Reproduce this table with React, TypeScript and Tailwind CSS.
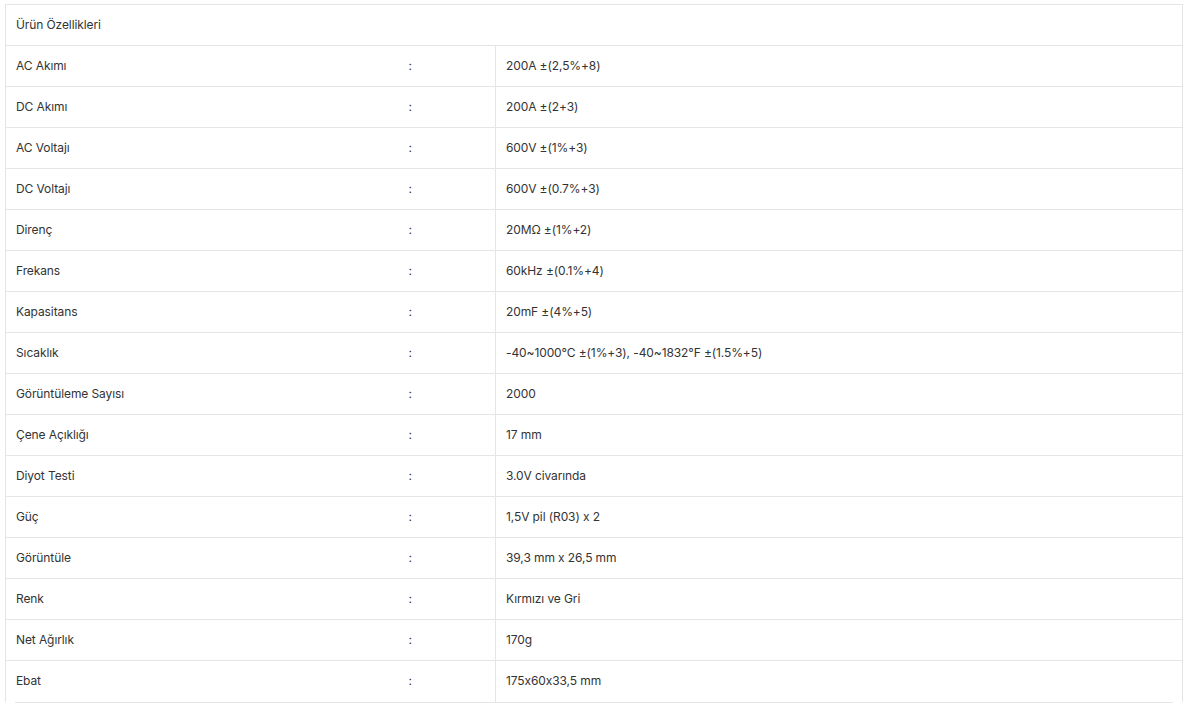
const rows: [string, string][] = [
  ['AC Akımı', '200A ±(2,5%+8)'],
  ['DC Akımı', '200A ±(2+3)'],
  ['AC Voltajı', '600V ±(1%+3)'],
  ['DC Voltajı', '600V ±(0.7%+3)'],
  ['Direnç', '20MΩ ±(1%+2)'],
  ['Frekans', '60kHz ±(0.1%+4)'],
  ['Kapasitans', '20mF ±(4%+5)'],
  ['Sıcaklık', '-40~1000°C ±(1%+3), -40~1832°F ±(1.5%+5)'],
  ['Görüntüleme Sayısı', '2000'],
  ['Çene Açıklığı', '17 mm'],
  ['Diyot Testi', '3.0V civarında'],
  ['Güç', '1,5V pil (R03) x 2'],
  ['Görüntüle', '39,3 mm x 26,5 mm'],
  ['Renk', 'Kırmızı ve Gri'],
  ['Net Ağırlık', '170g'],
  ['Ebat', '175x60x33,5 mm'],
]

function App() {
  return (
    <div className="min-h-screen bg-white pt-[4px] pl-[5px] pr-[6px] text-[12px] text-[#333] tracking-[-0.1px] [font-feature-settings:'calt'_0] font-['Inter','Liberation_Sans',sans-serif]">
      <table className="w-[1178px] border-collapse table-fixed">
        <colgroup>
          <col className="w-[393px]" />
          <col className="w-[97px]" />
          <col />
        </colgroup>
        <tbody>
          <tr className="h-[41px]">
            <td colSpan={3} className="border border-[#e5e5e5] pl-[10px] align-middle">Ürün Özellikleri</td>
          </tr>
          {rows.map(([label, value], i) => (
            <tr key={label} className="h-[41px]">
              <td className={`border-l border-[#e5e5e5] pl-[10px] align-middle ${i === rows.length - 1 ? '' : 'border-b'}`}>{label}</td>
              <td className={`border-[#e5e5e5] pl-[10px] align-middle ${i === rows.length - 1 ? '' : 'border-b'}`}>:</td>
              <td className={`border-l border-r border-[#e5e5e5] pl-[10px] align-middle ${i === rows.length - 1 ? '' : 'border-b'}`}>{value}</td>
            </tr>
          ))}
        </tbody>
      </table>
      <div className="ml-[10px] mr-[10px] h-px bg-[#e5e5e5]" />
    </div>
  )
}

export default App
